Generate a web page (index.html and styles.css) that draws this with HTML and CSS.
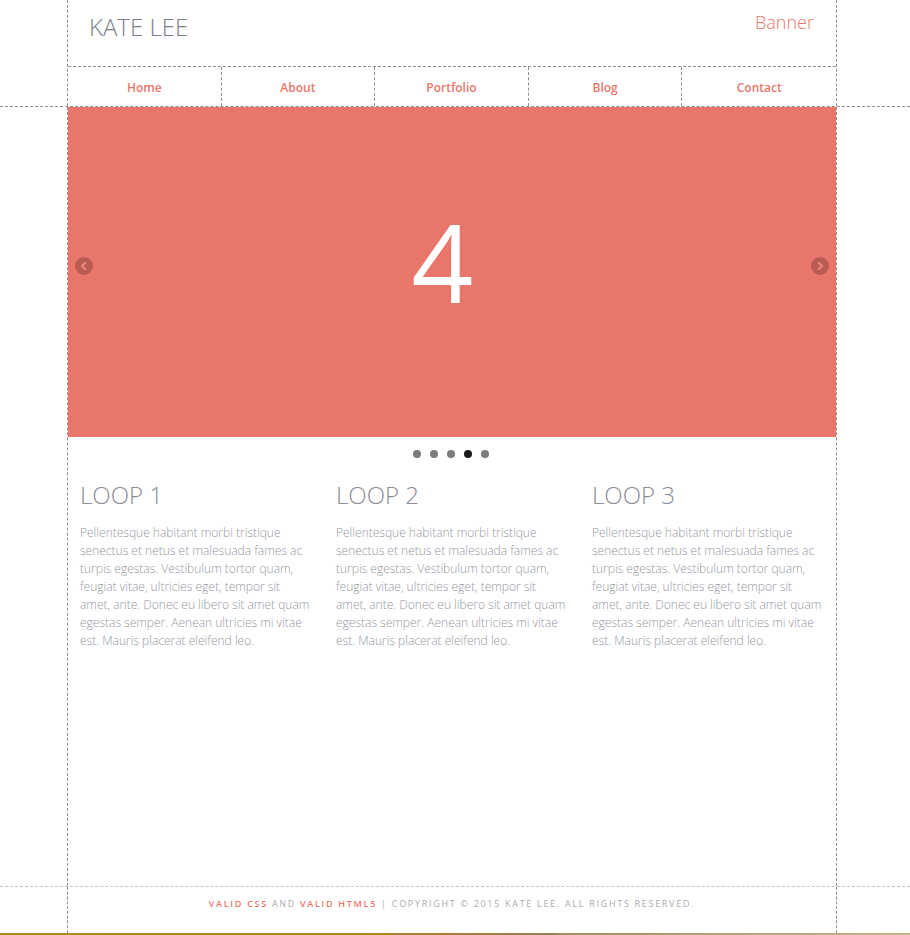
FILE: index.html
```html
<!DOCTYPE html>
<html>
<head>
<meta charset="utf-8">
<title>Kate Lee</title>
<link rel="stylesheet" href="styles.css">
</head>
<body>
<header class="site-header">
  <div class="wrap">
    <div class="brand-row">
      <h1 class="logo">KATE LEE</h1>
      <div class="banner">Banner</div>
    </div>
    <nav class="nav">
      <a class="nav-item" href="#">Home</a>
      <a class="nav-item" href="#">About</a>
      <a class="nav-item" href="#">Portfolio</a>
      <a class="nav-item" href="#">Blog</a>
      <a class="nav-item" href="#">Contact</a>
    </nav>
  </div>
</header>
<main class="wrap main">
  <section class="slider">
    <span class="slide-num">4</span>
    <button class="arrow arrow-prev" aria-label="Previous">
      <svg width="18" height="18" viewBox="0 0 18 18"><path d="M10.2 5.8 L7 9 L10.2 12.2" fill="none" stroke="#e9867b" stroke-width="2.2" stroke-linecap="round" stroke-linejoin="round"/></svg>
    </button>
    <button class="arrow arrow-next" aria-label="Next">
      <svg width="18" height="18" viewBox="0 0 18 18"><path d="M7.8 5.8 L11 9 L7.8 12.2" fill="none" stroke="#e9867b" stroke-width="2.2" stroke-linecap="round" stroke-linejoin="round"/></svg>
    </button>
  </section>
  <div class="dots">
    <span class="dot"></span>
    <span class="dot"></span>
    <span class="dot"></span>
    <span class="dot active"></span>
    <span class="dot"></span>
  </div>
  <section class="loops">
    <article class="loop">
      <h2>LOOP 1</h2>
      <p>Pellentesque habitant morbi tristique senectus et netus et malesuada fames ac turpis egestas. Vestibulum tortor quam, feugiat vitae, ultricies eget, tempor sit amet, ante. Donec eu libero sit amet quam egestas semper. Aenean ultricies mi vitae est. Mauris placerat eleifend leo.</p>
    </article>
    <article class="loop">
      <h2>LOOP 2</h2>
      <p>Pellentesque habitant morbi tristique senectus et netus et malesuada fames ac turpis egestas. Vestibulum tortor quam, feugiat vitae, ultricies eget, tempor sit amet, ante. Donec eu libero sit amet quam egestas semper. Aenean ultricies mi vitae est. Mauris placerat eleifend leo.</p>
    </article>
    <article class="loop">
      <h2>LOOP 3</h2>
      <p>Pellentesque habitant morbi tristique senectus et netus et malesuada fames ac turpis egestas. Vestibulum tortor quam, feugiat vitae, ultricies eget, tempor sit amet, ante. Donec eu libero sit amet quam egestas semper. Aenean ultricies mi vitae est. Mauris placerat eleifend leo.</p>
    </article>
  </section>
</main>
<footer class="site-footer">
  <div class="wrap footer-inner">
    <p class="legal"><a href="#">Valid CSS</a> and <a href="#">Valid HTML5</a> | Copyright © 2015 Kate Lee. All rights reserved.</p>
  </div>
</footer>
<div class="strip"></div>
</body>
</html>
```
FILE: styles.css
```css
* { box-sizing: border-box; }
html, body { margin: 0; padding: 0; background: #fff; }
body { font-family: "Open Sans", "Liberation Sans", sans-serif; color: #9a9ca6; }

.wrap {
  width: 770px;
  margin-left: 67px;
  border-left: 1px dashed #8e8e8e;
  border-right: 1px dashed #8e8e8e;
}

.site-header { border-bottom: 1px dashed #8e8e8e; }

.brand-row {
  height: 66px;
  display: flex;
  justify-content: space-between;
  align-items: flex-start;
  padding: 0 22px 0 21px;
}
.logo {
  margin: 10px 0 0;
  font-size: 24px;
  font-weight: 300;
  color: #7b7e8c;
  line-height: 33px;
}
.banner {
  margin-top: 10px;
  font-size: 18px;
  font-weight: 300;
  color: #e8766a;
  line-height: 25px;
}

.nav {
  display: grid;
  grid-template-columns: repeat(5, 1fr);
  height: 40px;
  border-top: 1px dashed #8e8e8e;
}
.nav-item {
  display: flex;
  align-items: center;
  justify-content: center;
  padding-top: 2px;
  font-size: 12px;
  font-weight: 600;
  color: #e8766a;
  text-decoration: none;
  border-right: 1px dashed #8e8e8e;
}
.nav-item:last-child { border-right: none; }

.main { height: 779px; }

.slider {
  position: relative;
  height: 330px;
  background: #e8766a;
  display: flex;
  align-items: center;
  justify-content: center;
}
.slide-num {
  font-size: 108px;
  font-weight: 400;
  color: #fff;
  line-height: 1;
  margin: -20px 19px 0 0;
}
.arrow {
  position: absolute;
  top: 150px;
  width: 18px;
  height: 18px;
  padding: 0;
  border: none;
  border-radius: 50%;
  background: rgba(60, 20, 20, 0.28);
  display: flex;
  align-items: center;
  justify-content: center;
}
.arrow-prev { left: 7px; }
.arrow-next { right: 7px; }

.dots {
  display: flex;
  justify-content: center;
  gap: 9px;
  padding: 13px 2px 0 0;
  height: 42px;
}
.dot {
  width: 8px;
  height: 8px;
  border-radius: 50%;
  background: #7b7b7b;
}
.dot.active { background: #1b1b1b; }

.loops {
  display: grid;
  grid-template-columns: repeat(3, 1fr);
}
.loop { padding: 0 12px; }
.loop h2 {
  margin: 0 0 13px;
  font-size: 24px;
  font-weight: 300;
  color: #8b8d99;
  line-height: 32px;
}
.loop p {
  margin: 0;
  font-size: 12px;
  font-weight: 300;
  line-height: 18px;
  color: #9597a2;
}

.site-footer { border-top: 1px dashed #c4c4c4; }
.footer-inner {
  height: 46px;
  display: flex;
  justify-content: center;
  padding-top: 10px;
}
.legal {
  margin: 0;
  font-size: 9px;
  letter-spacing: 1.7px;
  text-transform: uppercase;
  color: #aaaab2;
  line-height: 14px;
}
.legal a {
  color: #e8766a;
  font-weight: 600;
  text-decoration: none;
}

.strip {
  height: 2px;
  background: linear-gradient(90deg, #b8842c 0%, #b8832c 36%, #b87a2e 50%, #9b7f45 60%, #a88f55 62%, #c9b487 100%);
}
```
